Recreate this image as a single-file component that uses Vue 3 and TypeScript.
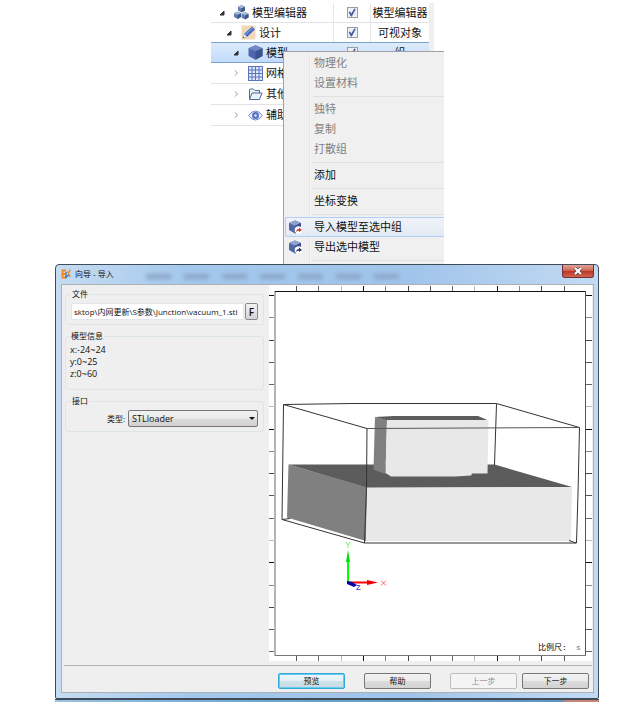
<script setup lang="ts">
import { ref } from 'vue'

interface TreeRow {
  name: string
  level: number
  open: boolean
  icon: string
  visible: boolean
  kind: string
}

interface MenuItem {
  label: string
  disabled?: boolean
  icon?: string
  active?: boolean
}

const rows = ref<TreeRow[]>([
  { name: '模型编辑器', level: 0, open: true, icon: 'cubes', visible: true, kind: '模型编辑器' },
  { name: '设计', level: 1, open: true, icon: 'pencil', visible: true, kind: '可视对象' },
  { name: '模型', level: 2, open: true, icon: 'cube', visible: true, kind: '组' },
  { name: '网格', level: 2, open: false, icon: 'grid', visible: true, kind: '' },
  { name: '其他', level: 2, open: false, icon: 'folder', visible: true, kind: '' },
  { name: '辅助', level: 2, open: false, icon: 'eye', visible: true, kind: '' },
])

const menu: MenuItem[][] = [
  [{ label: '物理化', disabled: true }, { label: '设置材料', disabled: true }],
  [{ label: '独特', disabled: true }, { label: '复制', disabled: true }, { label: '打散组', disabled: true }],
  [{ label: '添加' }],
  [{ label: '坐标变换' }],
  [{ label: '导入模型至选中组', icon: '#d8322c', active: true }, { label: '导出选中模型', icon: '#2b3568' }],
]

const filePath = ref('sktop\\内网更新\\S参数\\Junction\\vacuum_1.stl')
const loader = ref('STLloader')
const info = ['x:-24~24', 'y:0~25', 'z:0~60']

const shades = ['#555', '#666', '#bbb', '#111', '#888', '#444']
const xTicks = Array.from({ length: 13 }, (_, i) => ({ at: Math.round(27 + i * 22.3), color: shades[i % 6] }))
const yTicks = Array.from({ length: 17 }, (_, i) => ({ at: Math.round(10 + i * 22.27), color: shades[(i + 3) % 6] }))
</script>

<template>
  <main class="page">
    <section class="tree">
      <table class="tree-table">
        <colgroup><col><col class="col-check"><col class="col-kind"></colgroup>
        <tbody>
          <tr v-for="(row, i) in rows" :key="row.name" :class="{ selected: i === 2 }">
            <td>
              <div class="name" :class="'level-' + row.level">
                <svg class="arrow" viewBox="0 0 6 6">
                  <path v-if="row.open" d="M5 1V5H1Z" fill="#333" stroke="#333" />
                  <path v-else d="M2 0.500L4.500 3L2 5.500" fill="none" stroke="#999" />
                </svg>
                <svg class="icon" viewBox="0 0 15 15">
                  <g v-if="row.icon === 'cubes'">
                    <g v-for="p in [[4, 0], [0, 6.5], [7.5, 7]]" :key="p[0]" :transform="`translate(${p[0]} ${p[1]})`">
                      <path d="M3.500 0L7 1.800V5.500L3.500 7.500L0 5.500V1.800Z" fill="#5f7cb0" />
                      <path d="M3.500 0L7 1.800L3.500 3.500L0 1.800Z" fill="#a5b9d8" />
                      <path d="M3.500 3.500L7 1.800V5.500L3.500 7.500Z" fill="#3f5a8a" />
                    </g>
                  </g>
                  <g v-else-if="row.icon === 'pencil'">
                    <rect x="0.500" y="0.500" width="14" height="14" fill="#f1d9b8" />
                    <path d="M2 13L3 9L11 1.500L14 4.500L6 12Z" fill="#4b6bcb" />
                    <path d="M4 10L12 2.500" stroke="#8ba3e6" stroke-width="1" />
                    <path d="M2 13L3 9L6 12Z" fill="#f6efe4" />
                    <path d="M1.500 13.500L2.500 11.500L3.500 12.500Z" fill="#444" />
                  </g>
                  <g v-else-if="row.icon === 'cube'">
                    <path d="M7.500 0.300L14.500 3.200V11L7.500 14.700L0.500 11V3.200Z" fill="#4f68ae" />
                    <path d="M7.500 0.300L14.500 3.200L7.500 6.200L0.500 3.200Z" fill="#7189c6" />
                    <path d="M7.500 6.200L14.500 3.200V11L7.500 14.700Z" fill="#3d5391" />
                  </g>
                  <g v-else-if="row.icon === 'grid'">
                    <rect x="0.500" y="0.500" width="14" height="14" fill="#dfe7fa" stroke="#5a74be" />
                    <path d="M4 0V15M7.500 0V15M11 0V15M0 4H15M0 7.500H15M0 11H15" stroke="#5a74be" />
                  </g>
                  <g v-else-if="row.icon === 'folder'" fill="#eef3fa" stroke="#4f6b9c" stroke-linejoin="round">
                    <path d="M1.500 12.500V3Q1.500 2 2.500 2H5.500L7 3.500H11.500V6" />
                    <path d="M1.500 12.500L4 6H14L11.500 12.500Z" />
                  </g>
                  <g v-else>
                    <path d="M0.500 7.500Q7.500 -1.500 14.500 7.500Q7.500 16.500 0.500 7.500Z" fill="#eef2fc" stroke="#6c85cb" />
                    <circle cx="7.500" cy="7.500" r="3.500" fill="#5470c4" />
                    <circle cx="7.500" cy="7.500" r="1.300" fill="#e6ecfa" />
                  </g>
                </svg>
                <span>{{ row.name }}</span>
              </div>
            </td>
            <td class="center"><input v-model="row.visible" type="checkbox" class="check" :aria-label="row.name"></td>
            <td class="center">{{ row.kind }}</td>
          </tr>
        </tbody>
      </table>
      <div class="menu" role="menu">
        <div v-for="(group, g) in menu" :key="g" class="menu-group">
          <button
            v-for="item in group" :key="item.label" type="button" role="menuitem" class="menu-item"
            :class="{ active: item.active }" :disabled="item.disabled"
          >
            <span class="menu-icon">
              <svg v-if="item.icon" viewBox="0 0 15 15">
                <path d="M7 0.500L13 3V10L7 13.500L1 10V3Z" fill="#5068a6" />
                <path d="M7 0.500L13 3L7 5.800L1 3Z" fill="#8fa2cf" />
                <path d="M7 5.800L13 3V10L7 13.500Z" fill="#3a4f8c" />
                <circle cx="10.500" cy="10" r="3.800" fill="#fff" />
                <path d="M8 12Q8.500 9 11 9V7.500L14 10L11 12V10.700Q9.500 10.500 8 12Z" :fill="item.icon" />
              </svg>
            </span>
            <span>{{ item.label }}</span>
          </button>
        </div>
      </div>
    </section>

    <section class="dialog">
      <header class="titlebar">
        <svg class="logo" viewBox="0 0 10 10">
          <path d="M5 1.500H1.500V8.500H5M1.500 5H4.500" fill="none" stroke="#f08a1c" stroke-width="1.800" />
          <path d="M5 3V8.500L8 5.500" fill="none" stroke="#3f78b0" stroke-width="1.300" />
          <path d="M6 2.500L7.500 4L9.500 0.500M8 5L9 8" fill="none" stroke="#f08a1c" stroke-width="1.300" />
        </svg>
        <h1>向导 - 导入</h1>
        <div class="ghosts"><i v-for="n in 7" :key="n"></i></div>
        <button type="button" class="close" aria-label="关闭">
          <svg viewBox="0 0 10 8"><path d="M2 1L8 7M8 1L2 7" stroke="#5b4a50" stroke-width="3.400" /><path d="M2 1L8 7M8 1L2 7" stroke="#fff" stroke-width="2" /></svg>
        </button>
      </header>

      <div class="content">
        <div class="body">
          <form class="side" @submit.prevent>
            <fieldset>
              <legend>文件</legend>
              <div class="file-row">
                <input v-model="filePath" type="text" aria-label="文件">
                <button type="button">F</button>
              </div>
            </fieldset>
            <fieldset class="info">
              <legend>模型信息</legend>
              <p v-for="line in info" :key="line">{{ line }}</p>
            </fieldset>
            <fieldset>
              <legend>接口</legend>
              <div class="type-row">
                <label for="loader">类型:</label>
                <div class="select">
                  <select id="loader" v-model="loader"><option>STLloader</option></select>
                </div>
              </div>
            </fieldset>
          </form>

          <svg class="view" viewBox="0 0 323 376">
            <rect width="323" height="376" fill="#fff" />
            <g shape-rendering="crispEdges">
              <template v-for="t in xTicks" :key="t.at">
                <rect :x="t.at" y="1" width="1" height="5" :fill="t.color" />
                <rect :x="t.at" y="371" width="1" height="5" :fill="t.color" />
              </template>
              <template v-for="t in yTicks" :key="t.at">
                <rect x="0" :y="t.at" width="6" height="1" :fill="t.color" />
                <rect x="317" :y="t.at" width="6" height="1" :fill="t.color" />
              </template>
              <rect x="5" y="6" width="2" height="365" fill="#b4b4b4" />
              <rect x="6" y="6" width="311" height="1" fill="#111" />
              <rect x="316" y="6" width="1" height="365" fill="#555" />
              <rect x="6" y="370" width="311" height="1" fill="#777" />
            </g>
            <g transform="translate(-269 -285)">
              <path d="M288.500 464.500H494.500L572 487L367 488Z" fill="#5c5c5c" />
              <path d="M288.500 464.500L367.500 487.500L366 541L287 517.500Z" fill="#808080" />
              <path d="M367 487.500L572 487L571 541H366Z" fill="#e8e8e8" />
              <path d="M375 417L394 416H478L488.500 420.500H386Z" fill="#5c5c5c" />
              <path d="M375 417L387 420L385.500 474L373.500 469.500Z" fill="#808080" />
              <path d="M387 420H488.500L487.500 473.500H472L471 475.500L455 476.500H391L385.500 473Z" fill="#e8e8e8" />
              <g fill="none" stroke="#333" stroke-width="1">
                <path d="M283.500 404.500L353 403.500H496.500L579.500 427.500L578 493L576.500 543H364.500L282 519.500L283.500 404.500L367 428.500" />
                <path d="M496.500 404L494.500 465M367 428.500L366.500 487L364.500 543M569 540.500L576 543M282 519.500L290 518.500" />
                <path d="M367 428.500L579.500 427.500" stroke="#555" />
              </g>
              <path d="M348 582V560" stroke="#0f0" stroke-width="2" />
              <path d="M348 550L350 562H346Z" fill="#00e000" />
              <path d="M348 582.500H369" stroke="#f00" stroke-width="2" />
              <path d="M367 580L378 582.500L367 585Z" fill="#e00" />
              <path d="M347 581L352 582L357 585L354 587L347 584Z" fill="#0000a8" />
              <g fill="none">
                <path d="M346 542L348 545L350 542M348 545V548" stroke="#6f6" />
                <path d="M381 580.500L386 585.500M386 580.500L381 585.500" stroke="#f66" />
                <path d="M356.500 585.500H360L356.500 589.500H360.500" stroke="#55d" />
              </g>
              <text x="538" y="650" class="scale">比例尺:</text>
              <text x="576" y="650" class="scale dim">s</text>
            </g>
          </svg>
        </div>

        <footer class="actions">
          <button type="button" class="primary">预览</button>
          <button type="button">帮助</button>
          <button type="button" disabled>上一步</button>
          <button type="button">下一步</button>
        </footer>
      </div>
    </section>
    <div class="behind"></div>
  </main>
</template>

<style>
body {
  margin: 0;
  background: #fff;
}
</style>

<style scoped>
* {
  box-sizing: border-box;
}

.page {
  display: flex;
  flex-direction: column;
  padding: 0 33px 0 55px;
  font-family: "Open Sans", "Noto Sans CJK SC", sans-serif;
  color: #111;
}

button,
input,
select {
  margin: 0;
  font: inherit;
  color: inherit;
}

/* project tree */
.tree {
  position: relative;
  align-self: center;
  width: 234px;
  min-height: 264px;
  padding: 3px 10px 0 1px;
  overflow: hidden;
  font-size: 11px;
  line-height: 16px;
}

.tree-table {
  width: 100%;
  table-layout: fixed;
  border-collapse: separate;
  border-spacing: 0;
  border-right: 5px solid #efefef;
}

.col-check {
  width: 37px;
}

.col-kind {
  width: 58px;
}

.tree-table td {
  height: 20px;
  padding: 0;
  border-bottom: 1px solid #e3e3e3;
  border-right: 1px solid #e8e8e8;
  white-space: nowrap;
}

.tree-table tr:nth-child(n + 4) td {
  height: 21px;
}

.tree-table td:last-child {
  border-right: 0;
}

.tree-table .selected td {
  background: linear-gradient(#dcebfc, #c1dbfc);
  border-bottom-color: #7da2ce;
  border-right-color: transparent;
  box-shadow: 0 -1px #7da2ce;
}

.center {
  text-align: center;
}

.name {
  display: flex;
  align-items: center;
  padding-left: 8px;
}

.level-1 {
  padding-left: 15px;
}

.level-2 {
  padding-left: 22px;
}

.arrow {
  width: 6px;
  height: 6px;
  margin-right: 9px;
}

.icon {
  width: 15px;
  height: 15px;
  margin-right: 3px;
}

.check {
  appearance: none;
  display: block;
  width: 11px;
  height: 11px;
  margin: 0 auto;
  border: 1px solid #9c9d9d;
  background: #eef0f4;
}

.check:checked::before {
  content: "";
  display: block;
  width: 9px;
  height: 9px;
  background: #4a5ca6;
  clip-path: polygon(12% 45%, 28% 38%, 42% 62%, 76% 6%, 92% 12%, 48% 94%, 36% 94%);
}

/* context menu */
.menu {
  position: absolute;
  top: 51px;
  right: 0;
  bottom: 0;
  left: 73px;
  padding: 1px 0 0 1px;
  border-top: 1px solid #a0a0a0;
  border-left: 1px solid #a0a0a0;
  background: linear-gradient(90deg, #f0f0f0 25px, #e6e6e6 25px, #e6e6e6 26px, #f8f8f8 26px, #f8f8f8 27px, #f0f0f0 27px);
}

.menu-group {
  padding-bottom: 6px;
  background: linear-gradient(#e0e0e0, #e0e0e0) 28px calc(100% - 2px) / 100% 1px no-repeat;
}

.menu-item {
  display: flex;
  align-items: center;
  width: 100%;
  height: 20px;
  padding: 0;
  border: 1px solid transparent;
  border-right: 0;
  background: none;
  line-height: 16px;
  text-align: left;
}

.menu-item:disabled {
  color: #808080;
}

.menu-item.active {
  border-color: #aecff7;
  border-radius: 2px 0 0 2px;
  background: linear-gradient(#f0f3f8, #e3eaf4);
}

.menu-icon {
  width: 28px;
  height: 15px;
  padding-left: 2px;
}

.menu-icon svg {
  display: block;
  width: 15px;
  height: 15px;
}

/* wizard dialog */
.dialog {
  padding: 0 4px 5px 5px;
  border: 1px solid #3f4b59;
  border-radius: 4px 4px 2px 2px;
  background: linear-gradient(90deg, #c6dcf2, #a3c8ec 25%, #a0c4ea 65%, #c3daf3);
  font-size: 8px;
  line-height: 10px;
}

.titlebar {
  display: flex;
  align-items: flex-start;
  height: 19px;
}

.logo {
  width: 10px;
  height: 10px;
  margin: 4px 4px 0 0;
}

h1 {
  margin: 0;
  padding-top: 4px;
  font-size: 8px;
  font-weight: 400;
  white-space: nowrap;
}

.ghosts {
  display: flex;
  flex: 1;
  gap: 13px;
  padding: 9px 0 0 32px;
  filter: blur(2px);
}

.ghosts i {
  width: 25px;
  height: 5px;
  background: #8ba5c6;
}

.close {
  display: grid;
  place-items: center;
  width: 32px;
  height: 13px;
  padding: 0;
  border: 1px solid #6f3038;
  border-top: 0;
  border-radius: 0 0 3px 3px;
  background: linear-gradient(#e0a295, #d2695a 45%, #bb3524 50%, #d0634c);
}

.close svg {
  width: 10px;
  height: 8px;
}

.content {
  border: 1px solid #a9b0b8;
  background: #efefef;
}

.body {
  display: grid;
  grid-template-columns: minmax(0, 207fr) minmax(0, 323fr);
  padding-right: 1px;
}

.side {
  display: flex;
  flex-direction: column;
  gap: 6px;
  padding: 4px 5px 0 3px;
}

fieldset {
  min-width: 0;
  height: 36px;
  margin: 0;
  padding: 4px 5px 0;
  border: 1px solid #dce5ea;
  border-radius: 3px;
}

.info {
  height: 59px;
  padding: 3px 4px 0;
}

legend {
  height: 10px;
  padding: 0 1px;
}

p {
  margin: 0;
  font-size: 9px;
  line-height: 12px;
}

.file-row,
.type-row {
  display: flex;
  align-items: center;
}

.file-row input {
  flex: 1;
  min-width: 0;
  height: 17px;
  padding: 0 2px;
  border: 1px solid #e2e6ea;
  background: #fff;
}

.file-row button {
  width: 13px;
  height: 17px;
  margin-left: 1px;
  padding: 0;
  border: 1px solid #8a8a8a;
  border-radius: 2px;
  background: linear-gradient(#f2f2f2, #d4d4d4);
  font-size: 10px;
  font-weight: 600;
}

.type-row {
  gap: 3px;
  padding-left: 36px;
}

.type-row label {
  white-space: nowrap;
}

.select {
  position: relative;
  flex: 1;
}

.select::after {
  content: "";
  position: absolute;
  top: 7px;
  right: 3px;
  border: 3px solid transparent;
  border-top-color: #111;
  border-bottom: 0;
  pointer-events: none;
}

select {
  appearance: none;
  display: block;
  width: 100%;
  height: 17px;
  padding: 0 3px;
  border: 1px solid #777;
  border-radius: 2px;
  background: linear-gradient(#f2f2f2, #ebebeb 48%, #dcdcdc 52%, #d0d0d0);
  font-size: 9px;
}

.view {
  display: block;
  width: 100%;
}

.scale {
  font: 8px "Liberation Mono", "Noto Sans CJK SC", monospace;
}

.dim {
  fill: #777;
}

.actions {
  display: flex;
  justify-content: flex-end;
  margin: 4px 1px 0 2px;
  padding: 7px 3px 3px;
  border-top: 1px solid #b4b4b4;
}

.actions button {
  width: 67px;
  height: 16px;
  padding: 0;
  border: 1px solid #777;
  border-radius: 2px;
  background: linear-gradient(#f2f2f2, #ebebeb 48%, #dcdcdc 52%, #d2d2d2);
  line-height: 12px;
}

.actions button + button {
  margin-left: 19px;
}

.actions button:last-child {
  margin-left: 5px;
}

.actions .primary {
  border-color: #32a6d6;
  background: linear-gradient(#eef6fa, #e4f0f6 48%, #cfe0e8 52%, #c8dbe4);
  box-shadow: inset 0 0 0 1px #66cdf0;
}

.actions button:disabled {
  border-color: #bcbcbc;
  background: #f4f4f4;
  color: #8f8f8f;
}

.behind {
  height: 3px;
  border-top: 1px solid #3f4b59;
  background: linear-gradient(90deg, #9cc3e4, #6fa6cc 40%, #5f93bd 93%, #c98478 94%);
}
</style>
